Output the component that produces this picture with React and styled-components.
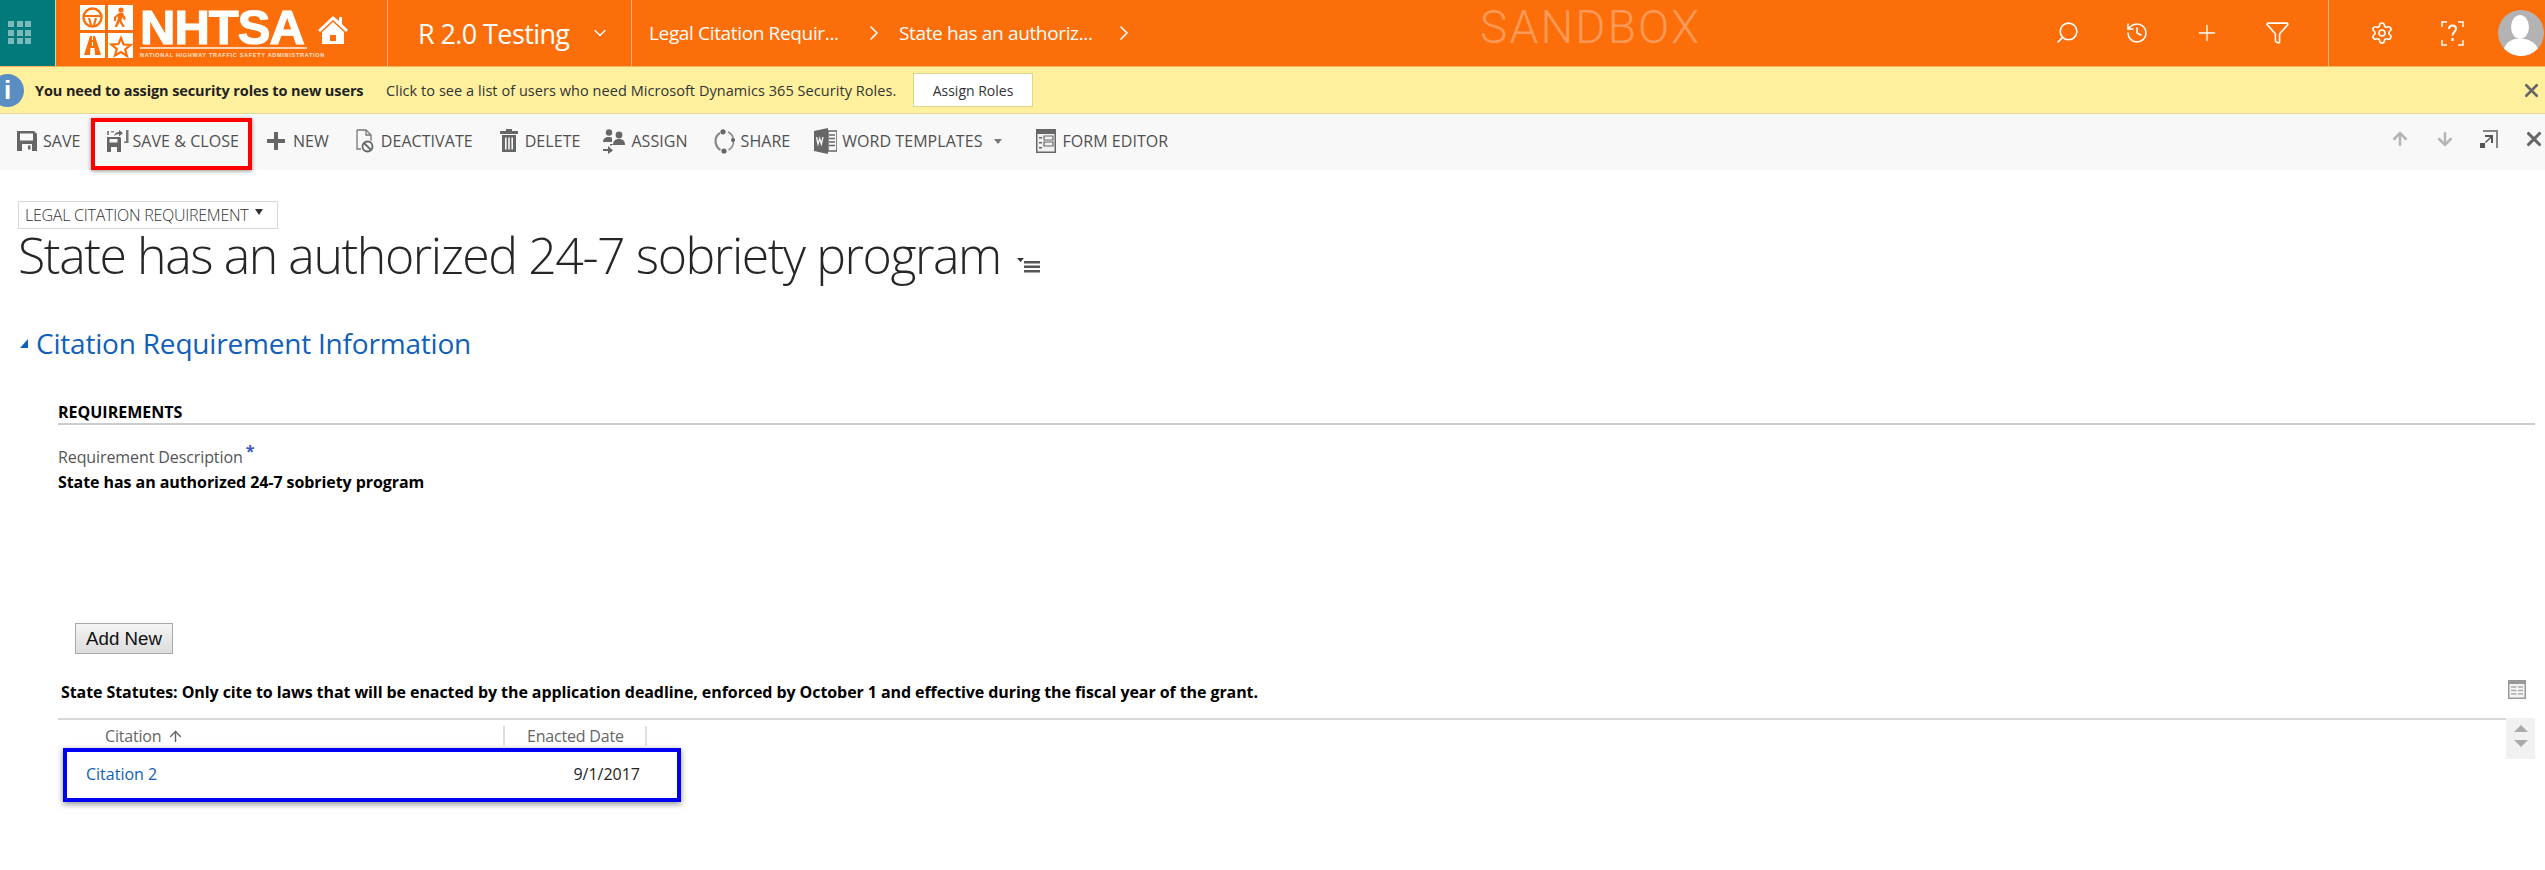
import React from 'react';
import styled, { createGlobalStyle } from 'styled-components';
import { Search, History, Plus, Funnel, Settings, ChevronDown, ChevronRight, ArrowUp, ArrowDown, X } from 'lucide-react';

const GlobalStyle = createGlobalStyle`
  html, body { margin: 0; padding: 0; background: #fff; overflow: hidden; }
  body { font-family: "Open Sans", "Noto Sans", sans-serif; color: #000; }
  * { box-sizing: border-box; }
`;

const Page = styled.div`
  width: 2545px;
  height: 870px;
  background: #fff;
  overflow: hidden;
`;

const Nav = styled.header`
  height: 67px;
  background: #fc6e09;
  display: flex;
  align-items: stretch;
  color: #fff;
  border-bottom: 1px solid #f7b35e;
  & > * { flex: none; }
`;

const WaffleTile = styled.div`
  width: 56px;
  background: #017a7c;
  border-right: 1px solid #b7d8d8;
  padding: 21px 0 0 8px;
  display: grid;
  grid-template-columns: repeat(3, 6px);
  grid-auto-rows: 6px;
  gap: 2.5px;
  span { background: #7cb9ba; }
`;

const LogoArea = styled.div`
  width: 332px;
  border-right: 1px solid #fdb584;
  padding-left: 24px;
  display: flex;
  align-items: flex-start;
`;

const LogoTiles = styled.svg`
  width: 54px;
  height: 53px;
  margin-top: 5px;
  flex: none;
`;

const LogoWords = styled.div`
  margin-left: 6px;
  width: 167px;
  flex: none;
  display: flex;
  flex-direction: column;
`;

const LogoName = styled.div`
  font-family: "Liberation Sans", sans-serif;
  font-weight: 700;
  font-size: 49px;
  line-height: 55px;
  height: 46px;
  letter-spacing: -1px;
  -webkit-text-stroke: 1.2px #fff;
  white-space: nowrap;
`;

const LogoTag = styled.div`
  border-top: 2px solid #fdd3b3;
  margin-top: 1px;
  padding-top: 3px;
  font-family: "Liberation Sans", sans-serif;
  font-weight: 700;
  font-size: 5.5px;
  line-height: 7px;
  letter-spacing: 0.72px;
  color: #fee3d0;
  white-space: nowrap;
`;

const HomeIcon = styled.svg`
  width: 30px;
  height: 29px;
  margin: 15px 0 0 11px;
  flex: none;
`;

const AppName = styled.div`
  width: 244px;
  border-right: 1px solid #fdb584;
  padding-left: 30px;
  display: flex;
  align-items: center;
  font-size: 27px;
  font-weight: 400;
  letter-spacing: -0.6px;
  white-space: nowrap;
  svg { margin-left: 21px; flex: none; }
`;

const Crumbs = styled.nav`
  display: flex;
  align-items: center;
  padding-left: 17px;
  font-size: 19px;
  letter-spacing: -0.35px;
  white-space: nowrap;
`;

const Crumb = styled.span`
  width: ${p => p.$w}px;
`;

const CrumbArrow = styled(ChevronRight)`
  flex: none;
  margin-right: ${p => p.$mr}px;
`;

const Sandbox = styled.div`
  margin-left: 344px;
  width: 229px;
  font-family: Roboto, "Open Sans", sans-serif;
  font-size: 46px;
  font-weight: 300;
  line-height: 54px;
  letter-spacing: 2.2px;
  color: #fe9a58;
`;

const NavIcons = styled.div`
  display: flex;
  align-items: center;
  gap: 45px;
  margin-left: 346px;
  width: 273px;
  padding-bottom: 1px;
  svg { flex: none; }
`;

const MirroredSearch = styled(Search)`
  transform: scaleX(-1);
`;

const NavTools = styled.div`
  border-left: 1px solid #fdb584;
  display: flex;
  align-items: center;
  padding-left: 41px;
  gap: 47px;
  svg { flex: none; }
`;

const Avatar = styled.svg`
  width: 46px;
  height: 46px;
  margin-left: -13px;
  flex: none;
`;

const Notice = styled.div`
  height: 47px;
  background: #fff09e;
  border-bottom: 1px solid #e3dc96;
  display: flex;
  align-items: center;
  font-size: 14.5px;
  color: #333;
  white-space: nowrap;
`;

const InfoBadge = styled.div`
  width: 33px;
  height: 33px;
  border-radius: 50%;
  background: #5a8ec2;
  color: #fff;
  margin-left: -9px;
  display: flex;
  align-items: center;
  justify-content: center;
  font-family: "Liberation Sans", sans-serif;
  font-weight: 700;
  font-size: 26px;
  flex: none;
`;

const NoticeTitle = styled.strong`
  margin-left: 11px;
  width: 351px;
  font-weight: 700;
  color: #222;
  letter-spacing: -0.1px;
`;

const NoticeText = styled.span`
  width: 527px;
  letter-spacing: 0.05px;
`;

const AssignButton = styled.button`
  width: 120px;
  height: 34px;
  background: #fff;
  border: 1px solid #dcd88f;
  font: inherit;
  font-size: 14px;
  color: #333;
  padding: 0;
`;

const NoticeClose = styled(X)`
  margin-left: auto;
  margin-right: 3px;
  color: #666;
`;

const Toolbar = styled.div`
  height: 56px;
  background: #f8f8f8;
  display: flex;
  align-items: flex-start;
  padding-left: 16px;
`;

const Tool = styled.div`
  display: flex;
  align-items: center;
  height: 51px;
  margin-top: 3px;
  margin-left: ${p => p.$ml || 0}px;
  padding-bottom: 3px;
  gap: ${p => p.$gap || 5}px;
  font-size: 16px;
  letter-spacing: 0.05px;
  color: #505050;
  white-space: nowrap;
  svg { flex: none; }
  ${p => p.$marked && `
    border: 4px solid #f00;
    box-shadow: 0 1px 4px rgba(0, 0, 0, 0.45);
    padding-left: 12px;
    padding-right: 9px;
    height: 52px;
    margin-top: 4px;
    padding-bottom: 7px;
  `}
`;

const Caret = styled.i`
  width: 0;
  height: 0;
  border-left: 4.5px solid transparent;
  border-right: 4.5px solid transparent;
  border-top: 5px solid #777;
  margin-left: 6px;
`;

const PagerIcons = styled.div`
  margin-left: auto;
  margin-top: 14px;
  display: flex;
  align-items: center;
  gap: 25px;
  svg { flex: none; }
`;

const Content = styled.main`
  padding: 31px 10px 0 18px;
`;

const FormPicker = styled.div`
  width: 260px;
  height: 28px;
  border: 1px solid #d8d8d8;
  display: flex;
  align-items: center;
  padding-left: 6px;
  font-size: 16px;
  font-weight: 300;
  letter-spacing: -0.25px;
  color: #333;
  white-space: nowrap;
  i {
    margin-left: 7px;
    margin-bottom: 6px;
    border-left: 4.5px solid transparent;
    border-right: 4.5px solid transparent;
    border-top: 6px solid #333;
  }
`;

const TitleRow = styled.div`
  display: flex;
  align-items: flex-end;
  margin-top: -5px;
`;

const Title = styled.h1`
  margin: 0;
  font-size: 50px;
  line-height: 62px;
  font-weight: 300;
  letter-spacing: -1.43px;
  color: #262626;
  white-space: nowrap;
`;

const TitleMenu = styled.svg`
  width: 23px;
  height: 16px;
  margin: 0 0 13px 16px;
`;

const SectionTitle = styled.h2`
  margin: 38px 0 0;
  display: flex;
  align-items: center;
  font-size: 28px;
  line-height: 38px;
  font-weight: 400;
  letter-spacing: -0.2px;
  color: #1160b7;
  i {
    width: 0;
    height: 0;
    margin: 0 8px 0 2px;
    border-left: 8px solid transparent;
    border-bottom: 9px solid #1160b7;
  }
`;

const Section = styled.section`
  margin: 40px 0 0 40px;
`;

const SectionHead = styled.h3`
  margin: 0;
  height: 23px;
  border-bottom: 2px solid #ccc;
  font-size: 16px;
  line-height: 20px;
  font-weight: 700;
  letter-spacing: 0;
  color: #000;
`;

const FieldLabel = styled.div`
  margin-top: 20px;
  font-size: 16px;
  line-height: 24px;
  font-weight: 400;
  letter-spacing: -0.1px;
  color: #555;
  sup {
    color: #3a55c8;
    font-weight: 700;
    font-size: 16px;
    line-height: 0;
    margin-left: 3px;
  }
`;

const FieldValue = styled.div`
  margin-top: 2px;
  font-size: 16px;
  line-height: 22px;
  font-weight: 700;
  letter-spacing: -0.07px;
  color: #000;
`;

const AddButton = styled.button`
  display: block;
  margin: 130px 0 0 17px;
  width: 98px;
  height: 31px;
  padding: 0;
  border: 1px solid #a9a9a9;
  background: linear-gradient(#f5f5f5, #dcdcdc);
  font-family: "Liberation Sans", sans-serif;
  font-size: 18.7px;
  color: #111;
`;

const GridCaption = styled.div`
  margin-top: 28px;
  height: 36px;
  padding: 0 9px 0 3px;
  display: flex;
  align-items: flex-start;
  justify-content: space-between;
  font-size: 16px;
  line-height: 20px;
  font-weight: 700;
  letter-spacing: -0.08px;
  svg { flex: none; margin-top: -2px; }
`;

const GridBody = styled.div`
  display: flex;
  align-items: flex-start;
`;

const GridMain = styled.div`
  flex: 1;
  border-top: 2px solid #d8d8d8;
`;

const GridHead = styled.div`
  display: flex;
  height: 28px;
  padding-top: 6px;
  font-size: 16px;
  letter-spacing: -0.2px;
  color: #666;
`;

const HeadCell = styled.div`
  width: ${p => p.$w}px;
  height: 20px;
  line-height: 20px;
  padding-left: ${p => p.$pl}px;
  display: flex;
  align-items: center;
  gap: 6px;
  border-right: 2px solid #dedede;
`;

const MarkedRow = styled.div`
  width: 618px;
  height: 54px;
  margin-left: 5px;
  border: 4px solid #0000f5;
  box-shadow: 0 2px 6px rgba(0, 0, 0, 0.45);
  display: flex;
  align-items: center;
  justify-content: space-between;
  padding: 0 37px 3px 19px;
  font-size: 16px;
  letter-spacing: 0;
`;

const CitationLink = styled.a`
  color: #1160b7;
`;

const DateText = styled.span`
  color: #222;
`;

const ScrollBox = styled.div`
  width: 29px;
  height: 41px;
  background: #f1f1f1;
  display: flex;
  flex-direction: column;
  align-items: center;
  gap: 8px;
  padding-top: 7px;
  i {
    width: 0;
    height: 0;
    border-left: 7px solid transparent;
    border-right: 7px solid transparent;
  }
  i:first-child { border-bottom: 7px solid #aaa; }
  i:last-child { border-top: 7px solid #aaa; }
`;

const grey = '#666';

const SaveGlyph = () => (
  <svg width="22" height="22" viewBox="0 0 22 22">
    <path d="M1 1h17l3 3v17H1z" fill={grey} />
    <rect x="4" y="3.5" width="13" height="7" fill="#f8f8f8" />
    <rect x="6" y="14" width="10" height="7" fill="#f8f8f8" />
    <rect x="12" y="15.5" width="2.5" height="4" fill={grey} />
  </svg>
);

const SaveCloseGlyph = () => (
  <svg width="23" height="24" viewBox="0 0 23 24">
    <path d="M0 8h13l1 1v14H0z" fill={grey} />
    <rect x="2.5" y="10" width="8" height="3.500" fill="#f8f8f8" />
    <rect x="4" y="18" width="6" height="5" fill="#f8f8f8" />
    <path d="M0 2h2v4H0zM4 2h3v1.500H4z" fill="#888" />
    <path d="M7 7c.5-2.500 2.500-4 5-4V1l4 3.200-4 3V5C10 5 8.500 5.800 7 7z" fill={grey} />
    <path d="M19 1h2.500v13H17v-1.500h2z" fill="#777" />
  </svg>
);

const PlusGlyph = () => (
  <svg width="18" height="18" viewBox="0 0 18 18">
    <path d="M7 0h4v7h7v4h-7v7H7v-7H0V7h7z" fill={grey} />
  </svg>
);

const DeactivateGlyph = () => (
  <svg width="18" height="24" viewBox="0 0 18 24" fill="none" stroke="#777" strokeWidth="1.300">
    <path d="M1 1h9l5 5v6M1 1v19h4" />
    <path d="M10 1v5h5" />
    <circle cx="11.500" cy="17.500" r="5" strokeWidth="1.800" stroke={grey} />
    <path d="M8 14l7 7" strokeWidth="1.800" stroke={grey} />
  </svg>
);

const TrashGlyph = () => (
  <svg width="18" height="24" viewBox="0 0 18 24">
    <path d="M6 0h6v2h6v3H0V2h6z" fill={grey} />
    <path d="M2 6h14v17H2z" fill={grey} />
    <path d="M5 8.500h1.600v12H5zM8.200 8.500h1.600v12H8.200zM11.400 8.500H13v12h-1.600z" fill="#f8f8f8" />
  </svg>
);

const AssignGlyph = () => (
  <svg width="22" height="25" viewBox="0 0 22 25" fill={grey}>
    <circle cx="6" cy="3.500" r="3.200" />
    <circle cx="16" cy="6" r="3.400" />
    <path d="M0 13c0-3 2-5 6-5 1.500 0 2 .3 3 .8V13z" />
    <path d="M10 16c0-4 2-6 6-6s6 2 6 6z" />
    <path d="M0 20h5v-3l5 4.500-5 3.500v-3H0zM11 15l-4-.1v2.100z" />
  </svg>
);

const ShareGlyph = () => (
  <svg width="21" height="25" viewBox="0 0 21 25" fill="none">
    <path d="M6 4C2 6.500 1 11 2 15c.6 2.500 2 4.500 4.500 6" stroke="#888" strokeWidth="2.200" />
    <path d="M14 3c3.500 1.500 5.500 5 5.500 9 0 4-2 7.500-5 9" stroke="#888" strokeWidth="1.600" />
    <circle cx="9" cy="2.800" r="2.600" fill={grey} />
    <circle cx="19" cy="11" r="2" fill={grey} />
    <circle cx="10" cy="22" r="2.600" fill={grey} />
  </svg>
);

const WordGlyph = () => (
  <svg width="23" height="26" viewBox="0 0 23 26">
    <path d="M0 3l14-3v26L0 23z" fill={grey} />
    <rect x="14" y="3" width="9" height="20" fill="none" stroke={grey} strokeWidth="1.500" />
    <path d="M15 7h6M15 10.500h6M15 14h6M15 17.500h6" stroke={grey} strokeWidth="1.300" />
    <path d="M2.500 9l1.500 7 1.700-5.500L7.400 16l1.600-7" fill="none" stroke="#f4f4f4" strokeWidth="1.400" />
  </svg>
);

const FormGlyph = () => (
  <svg width="20" height="24" viewBox="0 0 20 24">
    <rect x="0" y="0" width="20" height="24" fill={grey} />
    <rect x="1.500" y="5" width="17" height="17.500" fill="#f1f1f1" />
    <path d="M3 8h3v1.500H3zM3 13h3v1.500H3zM3 18h3v1.500H3z" fill={grey} />
    <path d="M8 7h9v4H8zM8 13h9v4H8z" fill="none" stroke={grey} strokeWidth="1.200" />
  </svg>
);

const HelpGlyph = () => (
  <svg width="23" height="25" viewBox="0 0 23 25" fill="none" stroke="#fff" strokeWidth="1.500">
    <path d="M6 1H1v5M17 1h5v5M6 24H1v-5M17 24h5v-5" />
    <path d="M8 8c0-2.200 1.500-3.500 3.500-3.500S15 6 15 8c0 3-3.500 3-3.500 6.500" strokeWidth="2" />
    <path d="M11.500 17v3" strokeWidth="2.200" />
  </svg>
);

const tools = [
  { label: 'NEW', icon: <PlusGlyph />, ml: 15, gap: 8 },
  { label: 'DEACTIVATE', icon: <DeactivateGlyph />, ml: 27, gap: 7 },
  { label: 'DELETE', icon: <TrashGlyph />, ml: 27, gap: 7 },
  { label: 'ASSIGN', icon: <AssignGlyph />, ml: 23, gap: 6 },
  { label: 'SHARE', icon: <ShareGlyph />, ml: 26, gap: 6 },
];

export default function App() {
  return (
    <Page>
      <GlobalStyle />
      <Nav>
        <WaffleTile>
          {Array.from({ length: 9 }).map((_, i) => <span key={i} />)}
        </WaffleTile>
        <LogoArea>
          <LogoTiles viewBox="0 0 54 53">
            <rect x="0" y="0" width="25" height="25" fill="#fff" />
            <rect x="28" y="0" width="25" height="25" fill="#fff" />
            <rect x="0" y="28" width="25" height="25" fill="#fff" />
            <rect x="28" y="28" width="25" height="25" fill="#fff" />
            <circle cx="12.500" cy="12.500" r="9" fill="none" stroke="#fc6e09" strokeWidth="2.400" />
            <path d="M4 11h17M9 13l2 7M16 13l-2 7" stroke="#fc6e09" strokeWidth="2.200" fill="none" />
            <circle cx="41" cy="5" r="2.600" fill="#fc6e09" />
            <path d="M39 8h4l3 6-2 1-2-3-.5 4 3.500 6h-2.500l-3-5-2.500 5h-2.500l3-7 .5-4-2 2v3h-2v-4z" fill="#fc6e09" />
            <path d="M10 31h5l6 19h-6l-.5-7h-4l-.5 7H4z" fill="#fc6e09" />
            <path d="M12 31h1v4h-1zM12 37h1v4h-1z" fill="#fff" />
            <path d="M41 33l2.600 6.500 7 .4-5.400 4.400 1.800 6.700L41 47l-6 3.500 1.800-6.700-5.400-4.400 7-.4z" fill="none" stroke="#fc6e09" strokeWidth="2.200" />
          </LogoTiles>
          <LogoWords>
            <LogoName>NHTSA</LogoName>
            <LogoTag>NATIONAL HIGHWAY TRAFFIC SAFETY ADMINISTRATION</LogoTag>
          </LogoWords>
          <HomeIcon viewBox="0 0 30 29">
            <path d="M15 1L0 15l2 2L15 5l13 12 2-2-6-6V2h-3v4z" fill="#fff" />
            <path d="M4 17l11-10 11 10v12H4zm8 3v6h6v-6z" fill="#fff" fillRule="evenodd" />
          </HomeIcon>
        </LogoArea>
        <AppName>
          R 2.0 Testing
          <ChevronDown size={20} strokeWidth={1.5} />
        </AppName>
        <Crumbs>
          <Crumb $w={213}>Legal Citation Requir...</Crumb>
          <CrumbArrow size={24} strokeWidth={1.6} $mr={13} />
          <Crumb $w={213}>State has an authoriz...</Crumb>
          <CrumbArrow size={24} strokeWidth={1.6} $mr={0} />
        </Crumbs>
        <Sandbox>SANDBOX</Sandbox>
        <NavIcons>
          <MirroredSearch size={25} strokeWidth={1.5} />
          <History size={24} strokeWidth={1.5} />
          <Plus size={26} strokeWidth={1.2} />
          <Funnel size={25} strokeWidth={1.5} />
        </NavIcons>
        <NavTools>
          <Settings size={24} strokeWidth={1.6} />
          <HelpGlyph />
          <Avatar viewBox="0 0 46 46">
            <defs>
              <clipPath id="avatar-clip"><circle cx="23" cy="23" r="23" /></clipPath>
            </defs>
            <g clipPath="url(#avatar-clip)">
              <rect width="46" height="46" fill="#b3b3b3" />
              <ellipse cx="22" cy="17" rx="9" ry="12" fill="#fff" />
              <path d="M5 46c0-11 5-15 12-17h10c8 2 14 6 14 17z" fill="#fff" />
            </g>
          </Avatar>
        </NavTools>
      </Nav>
      <Notice>
        <InfoBadge>i</InfoBadge>
        <NoticeTitle>You need to assign security roles to new users</NoticeTitle>
        <NoticeText>Click to see a list of users who need Microsoft Dynamics 365 Security Roles.</NoticeText>
        <AssignButton>Assign Roles</AssignButton>
        <NoticeClose size={21} strokeWidth={3} />
      </Notice>
      <Toolbar>
        <Tool><SaveGlyph />SAVE</Tool>
        <Tool $marked $ml={10} $gap={3}><SaveCloseGlyph />SAVE &amp; CLOSE</Tool>
        {tools.map(t => (
          <Tool key={t.label} $ml={t.ml} $gap={t.gap}>{t.icon}{t.label}</Tool>
        ))}
        <Tool $ml={24} $gap={5}><WordGlyph />WORD TEMPLATES<Caret /></Tool>
        <Tool $ml={34} $gap={7}><FormGlyph />FORM EDITOR</Tool>
        <PagerIcons>
          <ArrowUp size={20} strokeWidth={3} color="#b5b5b5" />
          <ArrowDown size={20} strokeWidth={3} color="#b5b5b5" />
          <svg width="18" height="18" viewBox="0 0 18 18">
            <path d="M3 0h15v18h-2V2H3z" fill="#888" />
            <rect x="0" y="13" width="5" height="5" fill="#555" />
            <path d="M5 5h8v8h-2V8l-5 5-1-1 5-5H5z" fill="#555" />
          </svg>
          <X size={22} strokeWidth={3.4} color="#666" />
        </PagerIcons>
      </Toolbar>
      <Content>
        <FormPicker>LEGAL CITATION REQUIREMENT<i /></FormPicker>
        <TitleRow>
          <Title>State has an authorized 24-7 sobriety program</Title>
          <TitleMenu viewBox="0 0 23 16">
            <path d="M0 1h7L3.500 5z" fill="#333" />
            <path d="M7 4h16v2.500H7zM7 8.500h16V11H7zM7 13h16v2.500H7z" fill="#555" />
          </TitleMenu>
        </TitleRow>
        <SectionTitle><i />Citation Requirement Information</SectionTitle>
        <Section>
          <SectionHead>REQUIREMENTS</SectionHead>
          <FieldLabel>Requirement Description<sup>*</sup></FieldLabel>
          <FieldValue>State has an authorized 24-7 sobriety program</FieldValue>
          <AddButton>Add New</AddButton>
          <GridCaption>
            State Statutes: Only cite to laws that will be enacted by the application deadline, enforced by October 1 and effective during the fiscal year of the grant.
            <svg width="18" height="19" viewBox="0 0 18 19">
              <rect width="18" height="19" fill="#999" />
              <rect x="1.500" y="4" width="15" height="13.500" fill="#f4f4f4" />
              <path d="M3 7h5.500M10 7h5M3 10.500h5.500M10 10.500h5M3 14h5.500M10 14h5" stroke="#aaa" strokeWidth="1.500" />
            </svg>
          </GridCaption>
          <GridBody>
            <GridMain>
              <GridHead>
                <HeadCell $w={447} $pl={47}>Citation <ArrowUp size={17} strokeWidth={2} color="#666" /></HeadCell>
                <HeadCell $w={142} $pl={22}>Enacted Date</HeadCell>
              </GridHead>
              <MarkedRow>
                <CitationLink>Citation 2</CitationLink>
                <DateText>9/1/2017</DateText>
              </MarkedRow>
            </GridMain>
            <ScrollBox><i /><i /></ScrollBox>
          </GridBody>
        </Section>
      </Content>
    </Page>
  );
}
